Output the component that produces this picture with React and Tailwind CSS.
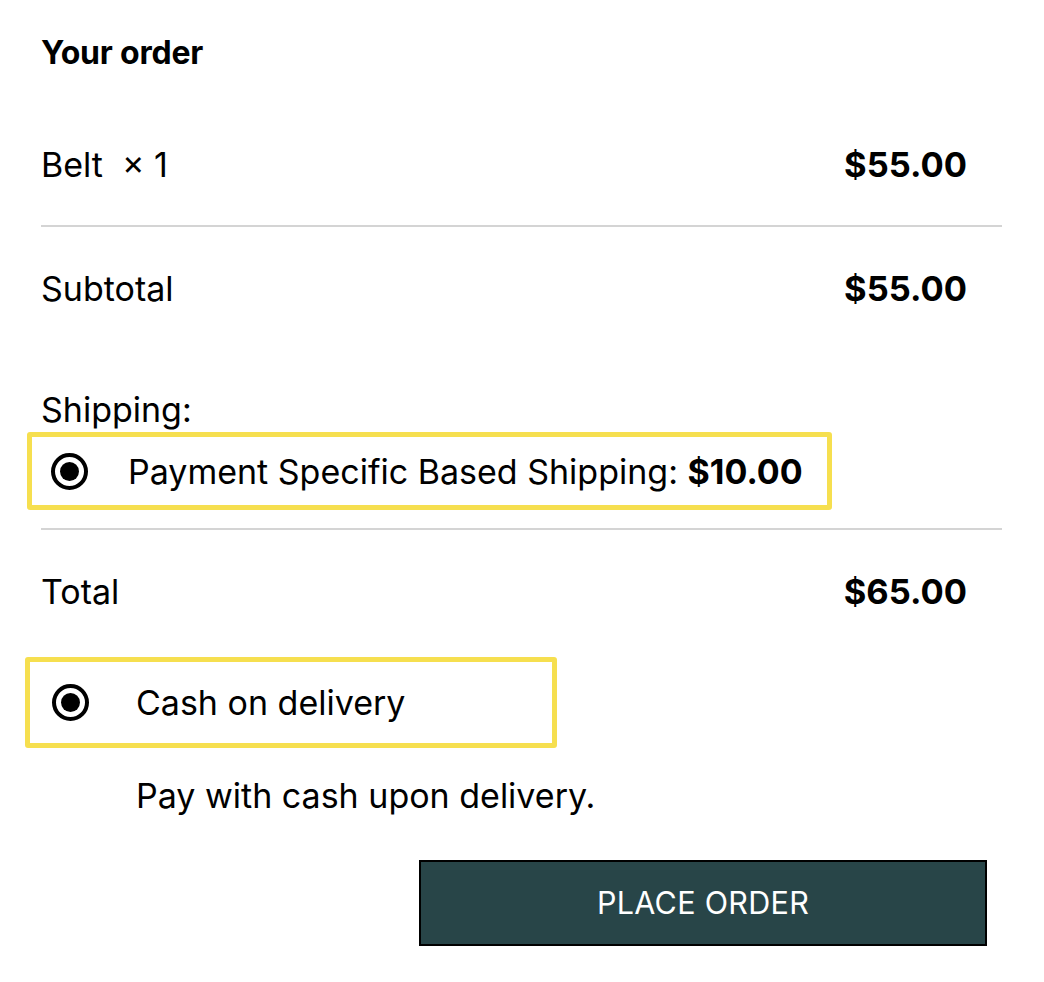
import React from "react";

function Radio() {
    return (
        <span className="flex h-[37px] w-[37px] shrink-0 items-center justify-center rounded-full border-[4px] border-black">
            <span className="h-[19px] w-[19px] rounded-full bg-black" />
        </span>
    )
}

export default function App() {
    return (
        <div className="min-h-[982px] w-[1044px] bg-white text-black font-['Inter','Liberation_Sans',sans-serif]">
            <div className="w-[1002px] pl-[41px]">
                <h3 className="pt-[36px] text-[32px] font-bold leading-[34px] tracking-[-0.2px]">Your order</h3>

                <div className="mt-[75px] flex items-center justify-between pr-[35px] leading-[40px]">
                    <span className="text-[34px]">Belt&nbsp; × 1</span>
                    <span className="text-[34.5px] font-bold">$55.00</span>
                </div>
                <div className="mt-[40px] h-[2px] bg-[#d4d4d4]" />

                <div className="mt-[42px] flex items-center justify-between pr-[35px] leading-[40px]">
                    <span className="text-[34px]">Subtotal</span>
                    <span className="text-[34.5px] font-bold">$55.00</span>
                </div>

                <div className="mt-[81px] text-[34px] leading-[40px]">Shipping:</div>
                <div className="-ml-[14px] mt-[2px] flex h-[78px] w-[805px] items-center rounded-[3px] border-[5px] border-[#f6df4f] pl-[19px]">
                    <Radio />
                    <span className="ml-[40px] text-[34px] whitespace-nowrap">
                        Payment Specific Based Shipping: <b>$10.00</b>
                    </span>
                </div>
                <div className="mt-[18px] h-[2px] bg-[#d4d4d4]" />

                <div className="mt-[42px] flex items-center justify-between pr-[35px] leading-[40px]">
                    <span className="text-[34px]">Total</span>
                    <span className="text-[34.5px] font-bold">$65.00</span>
                </div>

                <div className="-ml-[16px] mt-[45px] flex h-[91px] w-[532px] items-center rounded-[3px] border-[5px] border-[#f6df4f] pl-[22px]">
                    <Radio />
                    <span className="ml-[47px] text-[34px]">Cash on delivery</span>
                </div>

                <p className="mt-[28px] pl-[95px] text-[34px] leading-[40px]">Pay with cash upon delivery.</p>

                <div className="mt-[44px] flex justify-end pr-[15px]">
                    <button className="flex h-[86px] w-[568px] items-center justify-center border-2 border-black bg-[#284548] text-[30.5px] text-white tracking-[0.3px]">
                        PLACE ORDER
                    </button>
                </div>
            </div>
        </div>
    )
}
